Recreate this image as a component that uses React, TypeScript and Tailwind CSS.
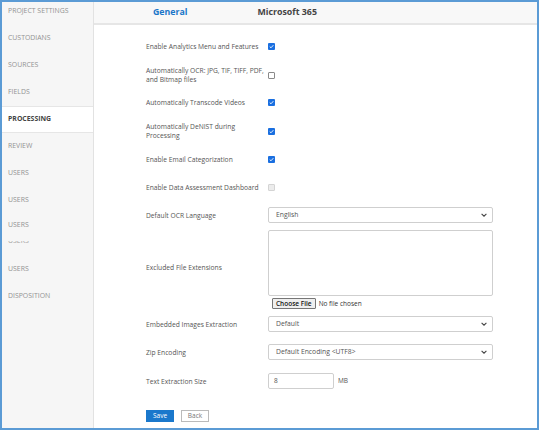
import React from 'react';

const navItems = ['PROJECT SETTINGS', 'CUSTODIANS', 'SOURCES', 'FIELDS', 'PROCESSING', 'REVIEW', 'USERS', 'USERS'];

function Check({ state }: { state: 'on' | 'off' | 'disabled' }) {
    if (state === 'on') {
        return (
            <span className="flex w-[7px] h-[7px] items-center justify-center rounded-[1px] bg-[#1a6fe0]">
                <svg width="5" height="5" viewBox="0 0 10 10">
                    <path d="M1.5 5.2 L4 7.6 L8.6 2.4" stroke="#fff" strokeWidth="1.8" fill="none" />
                </svg>
            </span>
        );
    }
    if (state === 'disabled') {
        return <span className="block w-[7px] h-[7px] rounded-[1px] border border-[#d4d4d4] bg-[#ececec]" />;
    }
    return <span className="block w-[7px] h-[7px] rounded-[1px] border border-[#8a8a8a] bg-white" />;
}

function Select({ value }: { value: string }) {
    return (
        <div className="flex w-[225px] h-[16px] items-center justify-between rounded-[2px] border border-[#cfcfcf] bg-white pl-[7px] pr-[5px] text-[6.8px] text-[#555]">
            <span>{value}</span>
            <svg width="6" height="4" viewBox="0 0 10 6">
                <path d="M1 1 L5 5 L9 1" stroke="#444" strokeWidth="1.8" fill="none" />
            </svg>
        </div>
    );
}

function Row({ label, h, children }: { label: React.ReactNode; h: string; children: React.ReactNode }) {
    return (
        <div className={`flex items-center ${h}`}>
            <div className="w-[122px] text-[6.7px] leading-[9px] text-[#555]">{label}</div>
            <div className="flex items-center">{children}</div>
        </div>
    );
}

export default function App() {
    return (
        <div
            className="flex w-[539px] h-[430px] overflow-hidden border-2 border-[#5b9bd5] bg-white"
            style={{ fontFamily: '"Open Sans", "Noto Sans", sans-serif' }}
        >
            {/* sidebar */}
            <div className="w-[92px] shrink-0 overflow-hidden border-r border-[#e2e2e2] bg-[#f6f6f6]">
                <div className="mt-[-4px] flex flex-col">
                    {navItems.map((item, i) =>
                        item === 'PROCESSING' ? (
                            <div
                                key={i}
                                className="flex h-[27px] items-center border-y border-[#e6e6e6] bg-white pl-[6px] text-[6.9px] font-bold text-[#444]"
                            >
                                {item}
                            </div>
                        ) : (
                            <div key={i} className="flex h-[27px] items-center pl-[6px] text-[6.9px] text-[#939393]">
                                {item}
                            </div>
                        )
                    )}
                    <div className="flex h-[23px] items-center pl-[6px] text-[6.9px] text-[#939393]">USERS</div>
                    <div className="h-[19px] pl-[6px] pt-[4px]">
                        <div className="h-[2px] overflow-hidden text-[6.9px] leading-[8px] text-[#a0a0a0]">
                            <div className="mt-[-4px]">USERS</div>
                        </div>
                    </div>
                    <div className="flex h-[27px] items-center pl-[6px] text-[6.9px] text-[#939393]">USERS</div>
                    <div className="flex h-[27px] items-center pl-[6px] text-[6.9px] text-[#939393]">DISPOSITION</div>
                </div>
            </div>

            {/* main */}
            <div className="flex flex-1 flex-col">
                <div className="flex h-[23px] shrink-0 items-center border-b-2 border-[#e6e6e6] bg-[#f8f8f8] text-[8.8px] font-bold">
                    <span className="ml-[59px] text-[#1b76c8]">General</span>
                    <span className="ml-[70px] text-[#444]">Microsoft 365</span>
                </div>

                <div className="flex flex-col pl-[52px] pt-[7px]">
                    <Row label="Enable Analytics Menu and Features" h="h-[28px]">
                        <Check state="on" />
                    </Row>
                    <Row label={<>Automatically OCR: JPG, TIF, TIFF, PDF,<br />and Bitmap files</>} h="h-[30px]">
                        <Check state="off" />
                    </Row>
                    <Row label="Automatically Transcode Videos" h="h-[24px]">
                        <Check state="on" />
                    </Row>
                    <Row label={<>Automatically DeNIST during<br />Processing</>} h="h-[34px]">
                        <Check state="on" />
                    </Row>
                    <Row label="Enable Email Categorization" h="h-[22px]">
                        <Check state="on" />
                    </Row>
                    <Row label="Enable Data Assessment Dashboard" h="h-[34px]">
                        <Check state="disabled" />
                    </Row>
                    <Row label="Default OCR Language" h="h-[22px]">
                        <Select value="English" />
                    </Row>
                    <div className="flex h-[84px] items-center">
                        <div className="w-[122px] text-[6.7px] text-[#555]">Excluded File Extensions</div>
                        <div className="flex flex-col pt-[3px]">
                            <div className="h-[66px] w-[225px] rounded-[2px] border border-[#cfcfcf] bg-white" />
                            <div className="mt-[2px] ml-[4px] flex items-center gap-[3px]">
                                <span className="flex h-[11px] items-center rounded-[1px] border border-[#767676] bg-[#efefef] px-[3px] text-[6.5px] font-semibold text-[#111]">
                                    Choose File
                                </span>
                                <span className="text-[6.5px] text-[#333]">No file chosen</span>
                            </div>
                        </div>
                    </div>
                    <Row label="Embedded Images Extraction" h="h-[28px]">
                        <Select value="Default" />
                    </Row>
                    <Row label="Zip Encoding" h="h-[28px]">
                        <Select value="Default Encoding <UTF8>" />
                    </Row>
                    <Row label="Text Extraction Size" h="h-[30px]">
                        <div className="flex h-[16px] w-[66px] items-center rounded-[2px] border border-[#cfcfcf] pl-[5px] text-[6.5px] text-[#555]">
                            8
                        </div>
                        <span className="ml-[4px] text-[6.5px] text-[#555]">MB</span>
                    </Row>
                    <div className="mt-[14px] flex gap-[7px]">
                        <button className="flex h-[12px] w-[28px] items-center justify-center bg-[#1a78cc] text-[6.5px] text-white">
                            Save
                        </button>
                        <button className="flex h-[12px] w-[28px] items-center justify-center border border-[#bbb] bg-white text-[6.5px] text-[#777]">
                            Back
                        </button>
                    </div>
                </div>
            </div>
        </div>
    );
}
